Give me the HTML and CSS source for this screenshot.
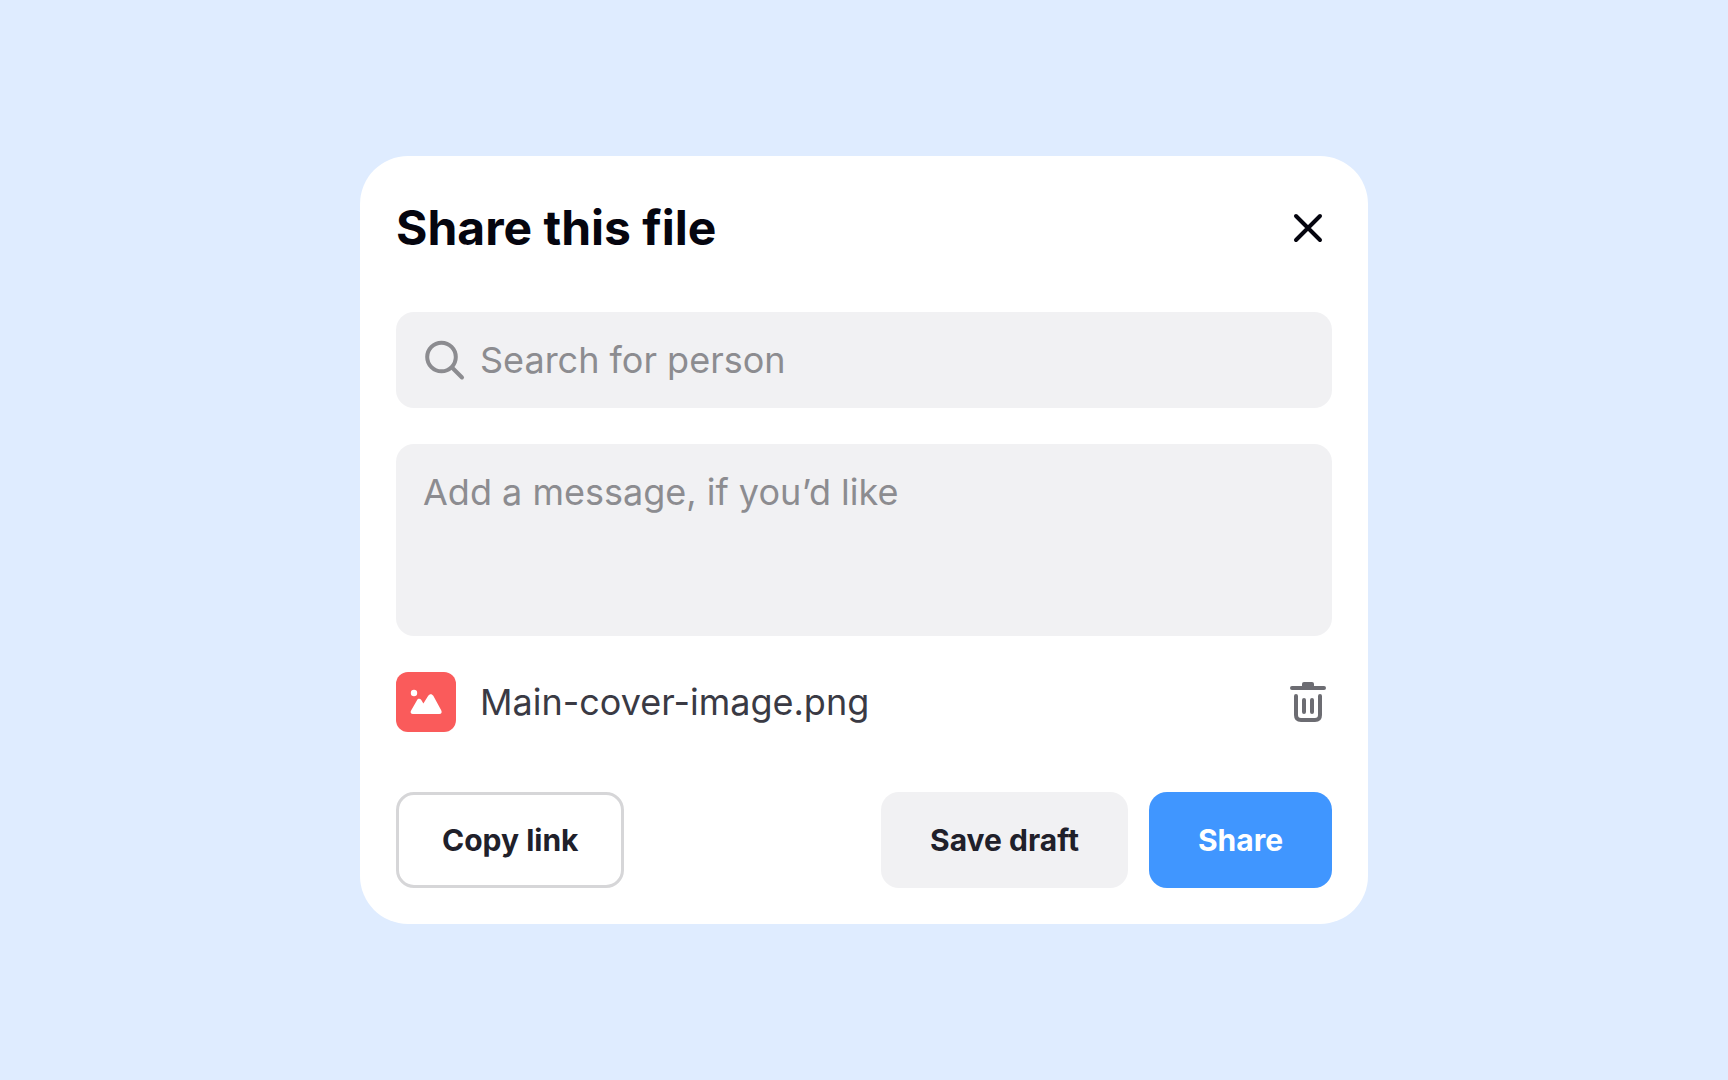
FILE: index.html
```html
<!DOCTYPE html>
<html lang="en">
<head>
    <meta charset="UTF-8">
    <meta name="viewport" content="width=device-width, initial-scale=1.0">
    <title>Share this file</title>

    <link rel="stylesheet" href="styles.css">

</head>
<body>

    <main class="modal">
        <header class="modal-header">
            <h1>Share this file</h1>
            <button class="icon-button close" type="button" aria-label="Close">
                <svg class="icon" viewBox="0 0 48 48">
                    <path d="M12 12L36 36M36 12L12 36"/>
                </svg>
            </button>
        </header>

        <form class="share-form">
            <label class="search">
                <svg class="icon" viewBox="0 0 48 48" aria-hidden="true">
                    <circle cx="21.5" cy="21" r="14.3"/>
                    <path d="M32 31.5L42 41.5"/>
                </svg>
                <input type="text" placeholder="Search for person" aria-label="Search for person">
            </label>

            <textarea class="message" placeholder="Add a message, if you’d like" aria-label="Message"></textarea>

            <div class="file">
                <svg class="file-icon" viewBox="0 0 60 60" aria-hidden="true">
                    <circle cx="18" cy="21" r="3.2"/>
                    <path d="M17 42C14.8 42 14 40.2 15.1 38.4L21 28.2C22 26.4 24.2 26.4 25.3 28L27.4 31.6L32.2 23.8C33.5 21.7 36 21.7 37.3 23.8L45.2 38.2C46.3 40.2 45.4 42 43.3 42Z"/>
                </svg>
                <p class="file-name">Main-cover-image.png</p>
                <button class="icon-button delete" type="button" aria-label="Delete file">
                    <svg class="icon" viewBox="0 0 48 48">
                        <path d="M8 10H40M12 18V37Q12 42 17 42H31Q36 42 36 37V18M20 22V34M28 22V34"/>
                        <path class="lid" d="M18 9V6Q18 4 20 4H28Q30 4 30 6V9Z"/>
                    </svg>
                </button>
            </div>

            <div class="actions">
                <button class="btn btn-outline" type="button">Copy link</button>
                <button class="btn btn-light" type="button">Save draft</button>
                <button class="btn btn-primary" type="submit">Share</button>
            </div>
        </form>
    </main>

</body>
</html>
```
FILE: styles.css
```css
*{
    margin:0;
    padding:0;
    box-sizing:border-box;
}

body{
    min-height:100vh;
    display:flex;
    align-items:center;
    justify-content:center;
    background-color:#dfecff;
    font-family:Inter, sans-serif;
    font-size:36px;
}

button, input, textarea{
    font:inherit;
    border:none;
    outline:none;
    background:none;
}

button{
    cursor:pointer;
}

.modal{
    width:100%;
    max-width:1008px;
    padding:36px;
    border-radius:48px;
    background-color:white;
}

.modal-header{
    display:flex;
    align-items:center;
    justify-content:space-between;
    margin-bottom:48px;
}

.modal-header h1{
    font-size:48px;
    line-height:72px;
    font-weight:bold;
    color:#05050f;
}

/* icons */

.icon{
    display:block;
    flex:none;
    width:48px;
    height:48px;
    fill:none;
    stroke:currentColor;
    stroke-width:4;
    stroke-linecap:round;
    stroke-linejoin:round;
}

.icon .lid{
    fill:currentColor;
    stroke:none;
}

.close{
    color:#05050f;
}

.delete{
    color:#6c6c72;
}

/* form */

.share-form{
    display:flex;
    flex-direction:column;
    gap:36px;
}

.search{
    display:flex;
    align-items:center;
    gap:12px;
    padding:24px;
    border-radius:18px;
    background-color:#f1f1f3;
    color:#8c8c90;
}

.search input{
    flex:1;
    min-width:0;
    height:48px;
    color:#3a3a44;
}

.message{
    display:block;
    width:100%;
    height:192px;
    padding:24px 27px;
    border-radius:18px;
    background-color:#f1f1f3;
    color:#3a3a44;
    line-height:48px;
    resize:none;
}

::placeholder{
    color:#8c8c90;
    opacity:1;
}

.file{
    display:flex;
    align-items:center;
    gap:24px;
}

.file-icon{
    flex:none;
    width:60px;
    height:60px;
    border-radius:12px;
    background-color:#fa5b5b;
    fill:white;
}

.file-name{
    flex:1;
    line-height:48px;
    color:#3a3a44;
}

/* buttons */

.actions{
    display:flex;
    gap:21px;
    margin-top:24px;
}

.btn{
    height:96px;
    padding:0 49px;
    border-radius:18px;
    font-size:30px;
    font-weight:bold;
    color:#20202a;
}

.btn-outline{
    margin-right:auto;
    padding:0 43px;
    border:3px solid #d6d6d8;
}

.btn-light{
    background-color:#f1f1f3;
}

.btn-primary{
    background-color:#4096ff;
    color:white;
}
```
